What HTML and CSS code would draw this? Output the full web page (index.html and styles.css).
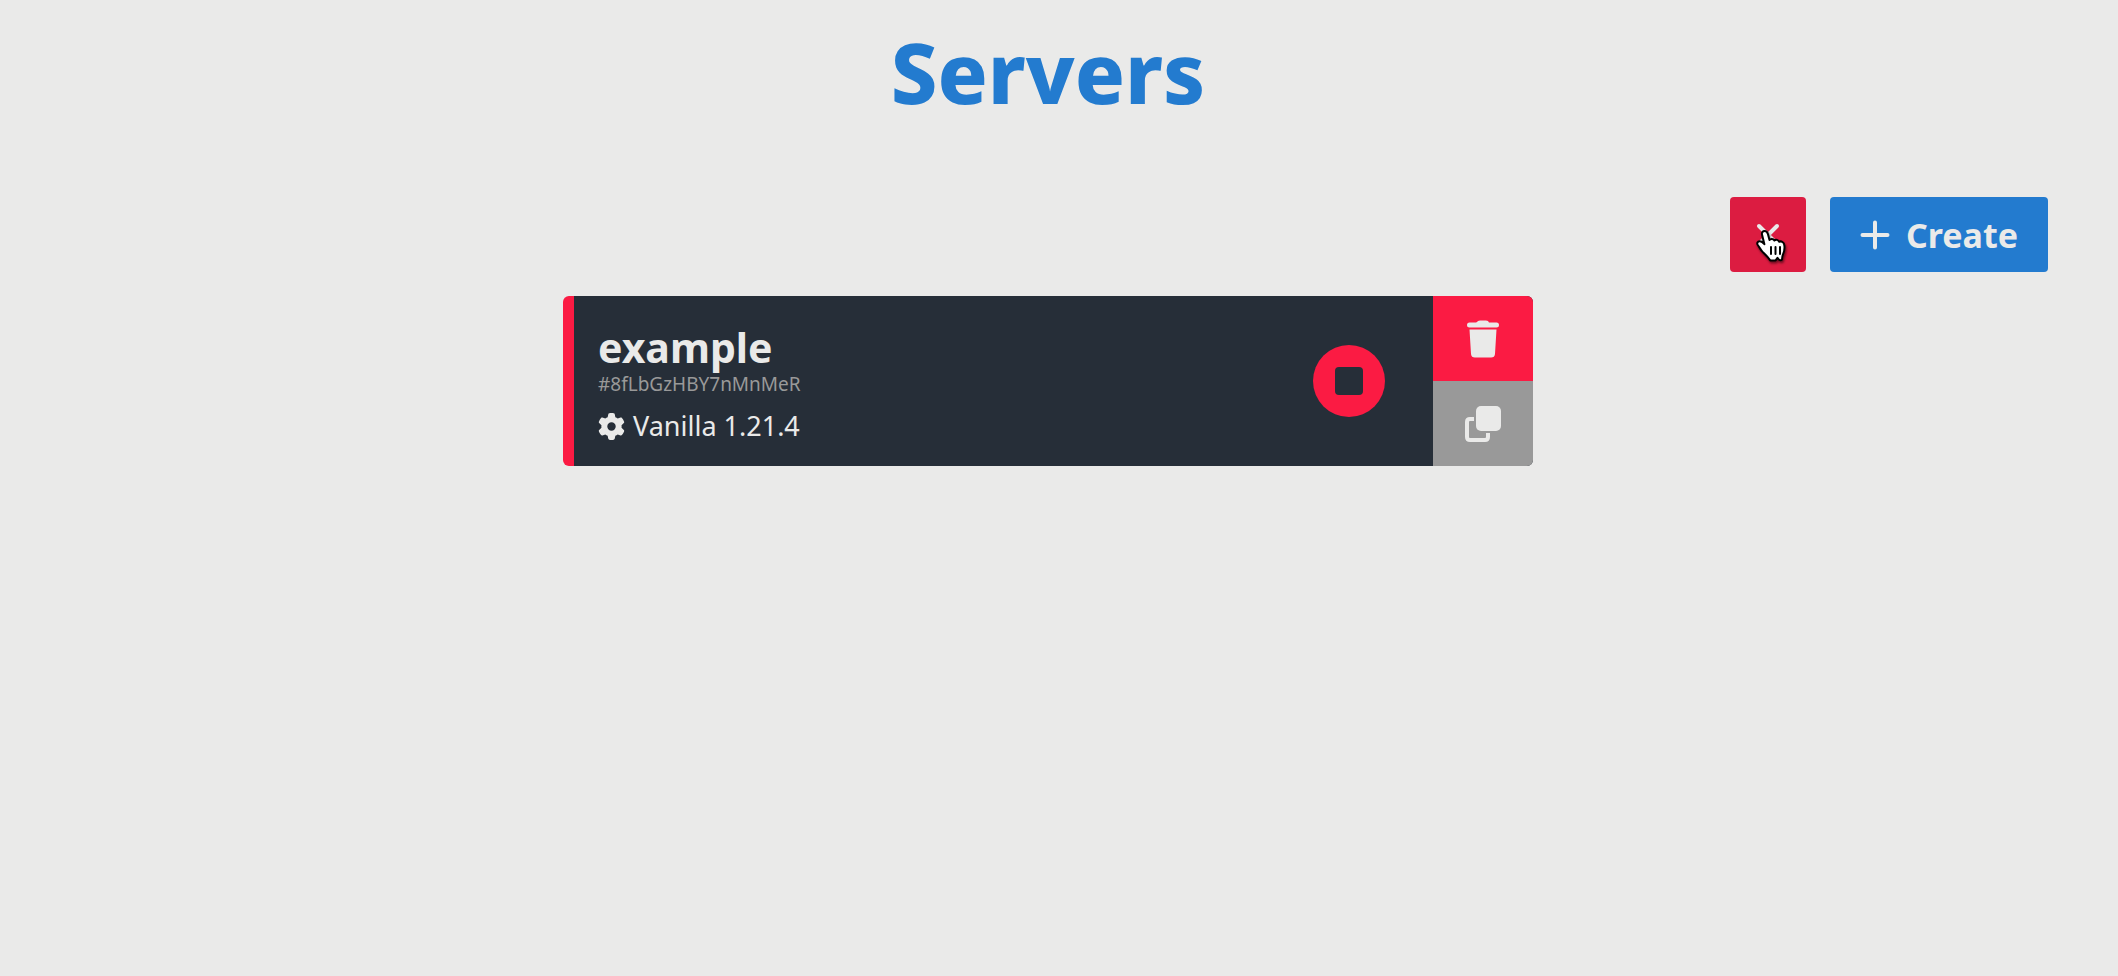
FILE: index.html
```html
<!DOCTYPE html>
<html lang="en">
<head>
<meta charset="utf-8">
<title>Servers</title>
<link rel="stylesheet" href="styles.css">
</head>
<body>
<main class="page">
  <h1 class="title">Servers</h1>
  <div class="toolbar">
    <button class="button button-cancel" type="button" aria-label="Cancel">
      <svg class="icon-close" viewBox="0 0 24 24" aria-hidden="true"><path d="M3 3l18 18M21 3L3 21"/></svg>
      <svg class="pointer" viewBox="0 0 32 34" aria-hidden="true"><path d="M8.5 2c1.800 0 2.900 1.200 3.400 3l1.600 6c1-1.500 3.800-1.600 4.900.5 1.500-1.300 4-.8 4.700 1.300 2-1.100 4.700.2 5.100 2.700.8 4.300.2 7-1.200 9.900-.9 1.900-.9 3-1 5.200-.8.800-2.600.9-3.400-.3l-1.100-1.500-1.900 2.600h-5.400c-2.600-4-5-6-7.600-8.500-2-2-3-4.500-4.800-6.900-1.200-1.700-.3-3.700 1.800-3.800 2-.1 3.500 1.300 4.800 3L6 5.500C5.500 3.600 6.800 2 8.500 2z"/><path class="pointer-lines" d="M15 18v7M19.500 18v7M24 18v7"/></svg>
    </button>
    <button class="button button-create" type="button">
      <svg class="icon-plus" viewBox="0 0 30 30" aria-hidden="true"><path d="M15 2.500v25M2.500 15h25"/></svg>
      <span>Create</span>
    </button>
  </div>
  <article class="server">
    <div class="details">
      <h2 class="name">example</h2>
      <p class="identifier">#8fLbGzHBY7nMnMeR</p>
      <p class="version">
        <svg class="icon-gear" viewBox="0 0 512 512" aria-hidden="true"><path d="M495.900 166.600c3.200 8.700.5 18.400-6.400 24.600l-43.300 39.400c1.100 8.300 1.700 16.800 1.700 25.400s-.6 17.100-1.700 25.400l43.300 39.400c6.900 6.200 9.600 15.900 6.400 24.600-4.400 11.900-9.700 23.300-15.800 34.300l-4.700 8.100c-6.600 11-14 21.400-22.100 31.200-5.900 7.200-15.700 9.600-24.500 6.800l-55.700-17.700c-13.400 10.300-28.200 18.900-44 25.400l-12.500 57.100c-2 9.100-9 16.300-18.200 17.800-13.800 2.300-28 3.500-42.500 3.500s-28.700-1.200-42.500-3.500c-9.200-1.500-16.200-8.700-18.200-17.800l-12.500-57.100c-15.800-6.500-30.600-15.100-44-25.400l-55.600 17.800c-8.800 2.800-18.600.3-24.500-6.800-8.100-9.800-15.500-20.200-22.100-31.200l-4.700-8.100c-6.100-11-11.400-22.400-15.800-34.300-3.200-8.700-.5-18.400 6.400-24.600l43.300-39.400c-1.100-8.400-1.700-16.900-1.700-25.500s.6-17.100 1.700-25.400l-43.300-39.400c-6.900-6.200-9.600-15.900-6.400-24.600 4.400-11.900 9.700-23.300 15.800-34.300l4.700-8.100c6.600-11 14-21.400 22.100-31.200 5.900-7.200 15.700-9.600 24.500-6.800l55.700 17.700c13.400-10.300 28.200-18.900 44-25.400l12.500-57.100c2-9.100 9-16.300 18.200-17.800C227.300 1.200 241.500 0 256 0s28.700 1.200 42.500 3.500c9.200 1.500 16.200 8.700 18.200 17.800l12.500 57.100c15.800 6.500 30.600 15.100 44 25.400l55.700-17.700c8.800-2.800 18.600-.3 24.500 6.800 8.100 9.800 15.500 20.200 22.100 31.200l4.700 8.100c6.100 11 11.400 22.400 15.800 34.300zM256 336a80 80 0 1 0 0-160 80 80 0 1 0 0 160z"/></svg>
        <span>Vanilla 1.21.4</span>
      </p>
    </div>
    <button class="stop" type="button" aria-label="Stop server">
      <svg class="icon-stop" viewBox="0 0 28 28" aria-hidden="true"><rect width="28" height="28" rx="4"/></svg>
    </button>
    <div class="actions">
      <button class="action action-delete" type="button" aria-label="Delete server">
        <svg class="icon-action" viewBox="0 0 36 38" aria-hidden="true"><path d="M12 2l1-1Q14 .5 15 .5h6q1 0 2 .5l1 1.500h7.500q2.500 0 2.500 2.500t-2.500 2.500h-27Q2 7.500 2 5t2.500-2.500H11zM4.500 9.500h27L30 34q-.3 3.500-4 3.500H10q-3.700 0-4-3.500z"/></svg>
      </button>
      <button class="action action-clone" type="button" aria-label="Clone server">
        <svg class="icon-action" viewBox="0 0 36 38" aria-hidden="true"><rect x="11" y="1" width="25" height="25" rx="5"/><path class="clone-back" d="M9 14H5q-3 0-3 3v15q0 3 3 3h15q3 0 3-3v-4"/></svg>
      </button>
    </div>
  </article>
</main>
</body>
</html>
```
FILE: styles.css
```css
* {
  box-sizing: border-box;
}

body {
  margin: 0;
  background: #eaeae9;
  color: #eaeae9;
  font-family: "Noto Sans", "Open Sans", sans-serif;
}

h1,
h2,
p {
  margin: 0;
}

button {
  border: 0;
  padding: 0;
  color: inherit;
  font: inherit;
  cursor: pointer;
}

svg {
  display: block;
  flex: none;
  fill: currentColor;
}

.page {
  margin-right: 22px;
  padding: 24px 48px;
}

.title {
  margin-bottom: 77px;
  color: #237bcf;
  font-size: 83px;
  font-weight: 800;
  line-height: 96px;
  text-align: center;
}

.toolbar {
  display: flex;
  justify-content: flex-end;
  gap: 24px;
  margin-bottom: 24px;
}

.button {
  display: flex;
  align-items: center;
  justify-content: center;
  height: 75px;
  border-radius: 4px;
}

.button-cancel {
  position: relative;
  width: 76px;
  background: #dc1c41;
}

.icon-close {
  width: 24px;
  height: 24px;
  fill: none;
  stroke: currentColor;
  stroke-width: 4;
  stroke-linecap: round;
}

.pointer {
  position: absolute;
  top: 32px;
  left: 26px;
  width: 32px;
  height: 34px;
  fill: #fff;
  stroke: #000;
  stroke-width: 2;
  stroke-linejoin: round;
  filter: drop-shadow(1px 2px 1px rgb(0 0 0 / 50%));
}

.pointer-lines {
  stroke-linecap: round;
}

.button-create {
  gap: 16px;
  padding: 0 30px;
  background: #237bcf;
  font-size: 34px;
  font-weight: 700;
}

.icon-plus {
  width: 30px;
  height: 30px;
  fill: none;
  stroke: currentColor;
  stroke-width: 4;
  stroke-linecap: round;
}

.server {
  display: flex;
  align-items: center;
  max-width: 970px;
  margin: 0 auto;
  overflow: hidden;
  border-left: 11px solid #fb1b43;
  border-radius: 6px;
  background: #262e38;
}

.details {
  flex: 1;
  padding: 28px 24px 24px;
}

.name {
  font-size: 41px;
  font-weight: 700;
  line-height: 46px;
}

.identifier {
  margin-bottom: 12px;
  color: #999;
  font-size: 19px;
  line-height: 28px;
}

.version {
  display: flex;
  align-items: center;
  gap: 8px;
  font-size: 27px;
  line-height: 32px;
}

.icon-gear {
  width: 27px;
  height: 27px;
}

.stop {
  display: grid;
  place-items: center;
  width: 72px;
  height: 72px;
  margin-right: 48px;
  border-radius: 50%;
  background: #fb1b43;
  color: #262e38;
}

.icon-stop {
  width: 28px;
  height: 28px;
}

.actions {
  display: flex;
  flex-direction: column;
  align-self: stretch;
  width: 100px;
}

.action {
  display: grid;
  flex: 1;
  place-items: center;
}

.action-delete {
  background: #fb1b43;
}

.action-clone {
  background: #999;
}

.icon-action {
  width: 36px;
  height: 38px;
}

.clone-back {
  fill: none;
  stroke: currentColor;
  stroke-width: 4;
}
```
